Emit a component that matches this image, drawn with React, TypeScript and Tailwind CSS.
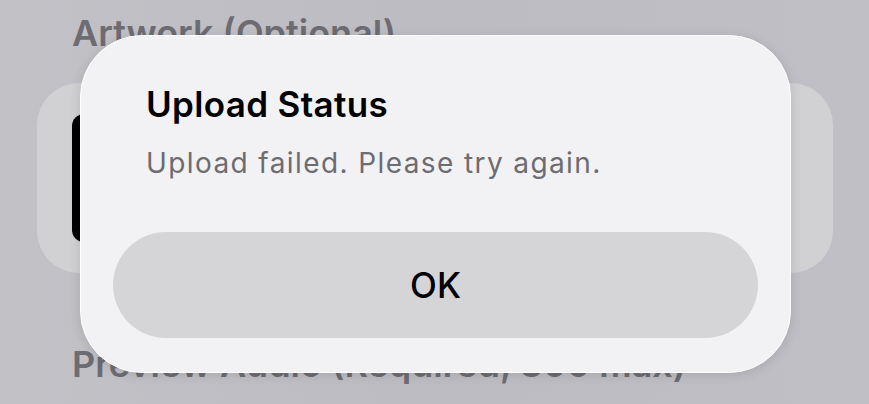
export default function App() {
  return (
    <div
      className="relative w-[869px] h-[404px] overflow-hidden bg-gradient-to-r from-[#c2c1c6] via-[#bdbcc2] to-[#c0bfc5]"
      style={{ fontFamily: "Inter, 'Noto Sans', sans-serif" }}
    >
      {/* page behind the alert */}
      <div className="flex flex-col pt-[11px]">
        <div className="pl-[72px] text-[36px] leading-[44px] font-semibold text-[#6d6c72]">
          Artwork (Optional)
        </div>
        <div className="ml-[37px] mt-[28px] w-[796px] h-[190px] rounded-[42px] bg-[#d1d1d3] flex items-center pl-[35px]">
          <div className="w-[60px] h-[128px] rounded-[12px] bg-black" />
        </div>
        <div className="pl-[72px] mt-[69px] text-[36px] leading-[44px] font-semibold text-[#6d6c72]">
          Preview Audio (Required, 300 max)
        </div>
      </div>

      {/* alert */}
      <div className="absolute left-[80px] top-[35px] w-[711px] h-[338px] rounded-[62px] bg-[#f2f2f5] border border-white shadow-[0_2px_12px_rgba(0,0,0,0.12)] flex flex-col px-[32px] pt-[48px] pb-[34px]">
        <div className="pl-[33px] text-[35px] leading-[40px] font-semibold tracking-[0.01em] text-black">
          Upload Status
        </div>
        <div className="pl-[33px] mt-[22px] text-[28px] leading-[34px] tracking-[0.05em] text-[#6c6c71]">
          Upload failed. Please try again.
        </div>
        <button className="mt-auto h-[106px] w-full rounded-full bg-[#d5d5d7] flex items-center justify-center text-[35px] font-medium text-black">
          OK
        </button>
      </div>
    </div>
  );
}
